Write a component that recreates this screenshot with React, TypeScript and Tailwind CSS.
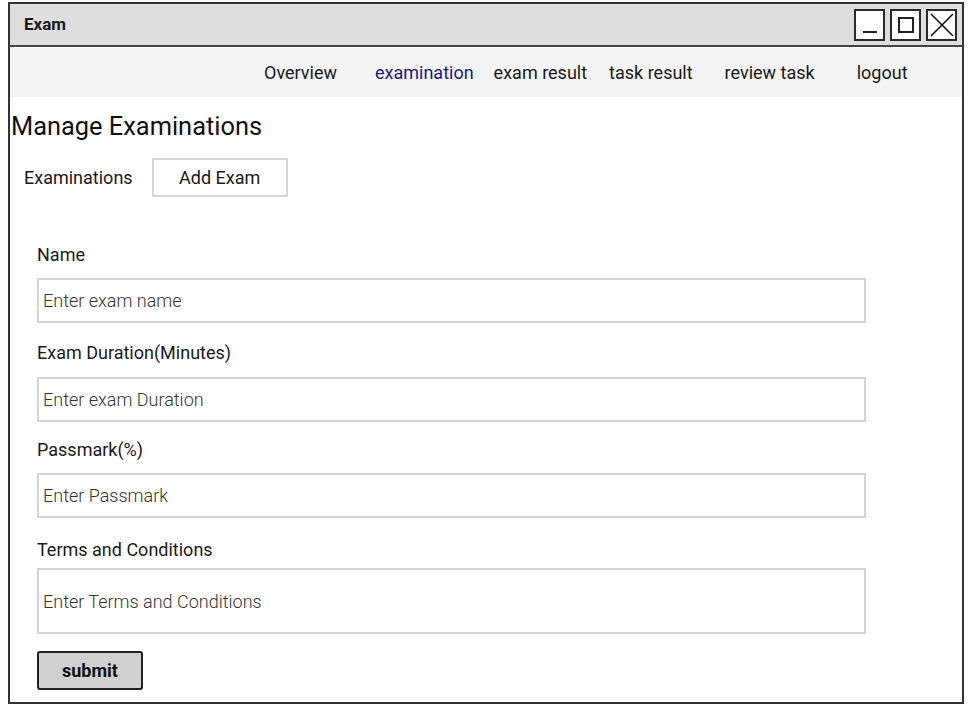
import * as React from "react";

const NAV: { label: string; ml: string; active?: boolean }[] = [
  { label: "Overview", ml: "ml-[254px]" },
  { label: "examination", ml: "ml-[38px]", active: true },
  { label: "exam result", ml: "ml-[20px]" },
  { label: "task result", ml: "ml-[22px]" },
  { label: "review task", ml: "ml-[32px]" },
  { label: "logout", ml: "ml-[42px]" },
];

const FIELDS: { label: string; placeholder: string; h: string; mt: string; gap: string }[] = [
  { label: "Name", placeholder: "Enter exam name", h: "h-[45px]", mt: "mt-0", gap: "mt-[11px]" },
  { label: "Exam Duration(Minutes)", placeholder: "Enter exam Duration", h: "h-[45px]", mt: "mt-[18px]", gap: "mt-[12px]" },
  { label: "Passmark(%)", placeholder: "Enter Passmark", h: "h-[45px]", mt: "mt-[16px]", gap: "mt-[11px]" },
  { label: "Terms and Conditions", placeholder: "Enter Terms and Conditions", h: "h-[66px]", mt: "mt-[20px]", gap: "mt-[6px]" },
];

function WinButton({ children }: { children: React.ReactNode }) {
  return (
    <div className="flex h-[32px] w-[31px] items-center justify-center border-2 border-[#2a2a2a] bg-white">
      {children}
    </div>
  );
}

export default function App() {
  return (
    <div className="h-[708px] w-[972px] bg-white pl-[8px] pt-[2px] font-['Roboto',sans-serif] text-[#1a1a1a]">
      <div className="flex h-[702px] w-[956px] flex-col border-2 border-[#333] bg-white">
        {/* title bar */}
        <div className="flex h-[43px] items-center border-b-2 border-[#444] bg-[#dedede] pl-[14px] pr-[5px]">
          <span className="flex-1 text-[17px] font-bold">Exam</span>
          <div className="flex gap-[5px]">
            <WinButton>
              <span className="mt-[14px] block h-[2px] w-[14px] bg-[#222]" />
            </WinButton>
            <WinButton>
              <span className="block h-[16px] w-[16px] border-2 border-[#222]" />
            </WinButton>
            <WinButton>
              <svg width="24" height="24" viewBox="0 0 24 24" fill="none" stroke="#111" strokeWidth="1.6">
                <path d="M1 1 L23 23 M23 1 L1 23" />
              </svg>
            </WinButton>
          </div>
        </div>

        {/* nav */}
        <div className="mt-[1px] flex h-[49px] items-center bg-[#f3f3f3] text-[18px]">
          {NAV.map((n) => (
            <span key={n.label} className={`${n.ml} ${n.active ? "text-[#1a1a80]" : "text-[#1a1a1a]"}`}>
              {n.label}
            </span>
          ))}
        </div>

        <h1 className="ml-[1px] mt-[14px] text-[25.4px] leading-[30px] text-[#111]">Manage Examinations</h1>

        <div className="mt-[17px] flex items-center">
          <span className="ml-[14px] text-[18px]">Examinations</span>
          <div className="ml-[19px] flex h-[39px] w-[136px] items-center justify-center border-2 border-[#d6d6d6] text-[18px]">
            Add Exam
          </div>
        </div>

        <div className="ml-[27px] mt-[46px] flex flex-col">
          {FIELDS.map((f) => (
            <div key={f.label} className={`${f.mt} flex flex-col`}>
              <label className="text-[18px] leading-[24px] text-[#1a1a1a]">{f.label}</label>
              <div
                className={`${f.h} ${f.gap} flex w-[829px] items-center border-2 border-[#d4d4d4] pl-[4px] text-[18px] font-light text-[#333]`}
              >
                {f.placeholder}
              </div>
            </div>
          ))}
          <button className="mt-[17px] flex h-[39px] w-[106px] items-center justify-center rounded-[3px] border-2 border-[#222] bg-[#d0d0d0] text-[18px] font-bold text-[#111]">
            submit
          </button>
        </div>
      </div>
    </div>
  );
}
